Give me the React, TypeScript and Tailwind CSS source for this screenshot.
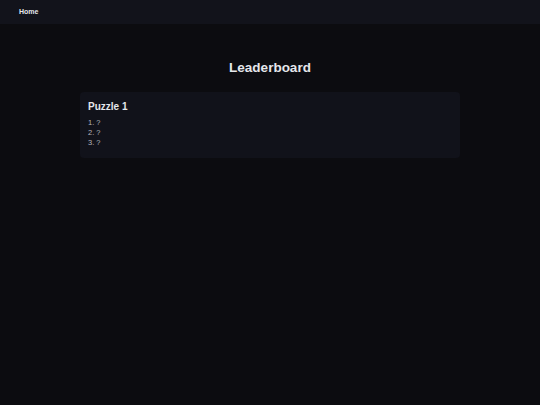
export default function App() {
  return (
    <div className="min-h-[405px] w-full bg-[#0c0c10] font-['Liberation_Sans',Arial,sans-serif]">
      <nav className="h-[24px] bg-[#12131b] flex items-center pl-[19px]">
        <span className="text-[7px] font-bold text-[#e5e7eb]">Home</span>
      </nav>
      <main className="flex flex-col items-center pt-[35px]">
        <h1 className="text-[13.5px] leading-[18px] font-bold text-[#e5e7eb]">Leaderboard</h1>
        <div className="mt-[15px] w-[380px] rounded-[4px] bg-[#11121a] px-[8px] pt-[8px] pb-[10px]">
          <h2 className="text-[10px] leading-[14px] font-bold text-[#e5e7eb]">Puzzle 1</h2>
          <ol className="mt-[4px] text-[7.5px] leading-[10px] text-[#b4b4bc]">
            <li>1. ?</li>
            <li>2. ?</li>
            <li>3. ?</li>
          </ol>
        </div>
      </main>
    </div>
  );
}
